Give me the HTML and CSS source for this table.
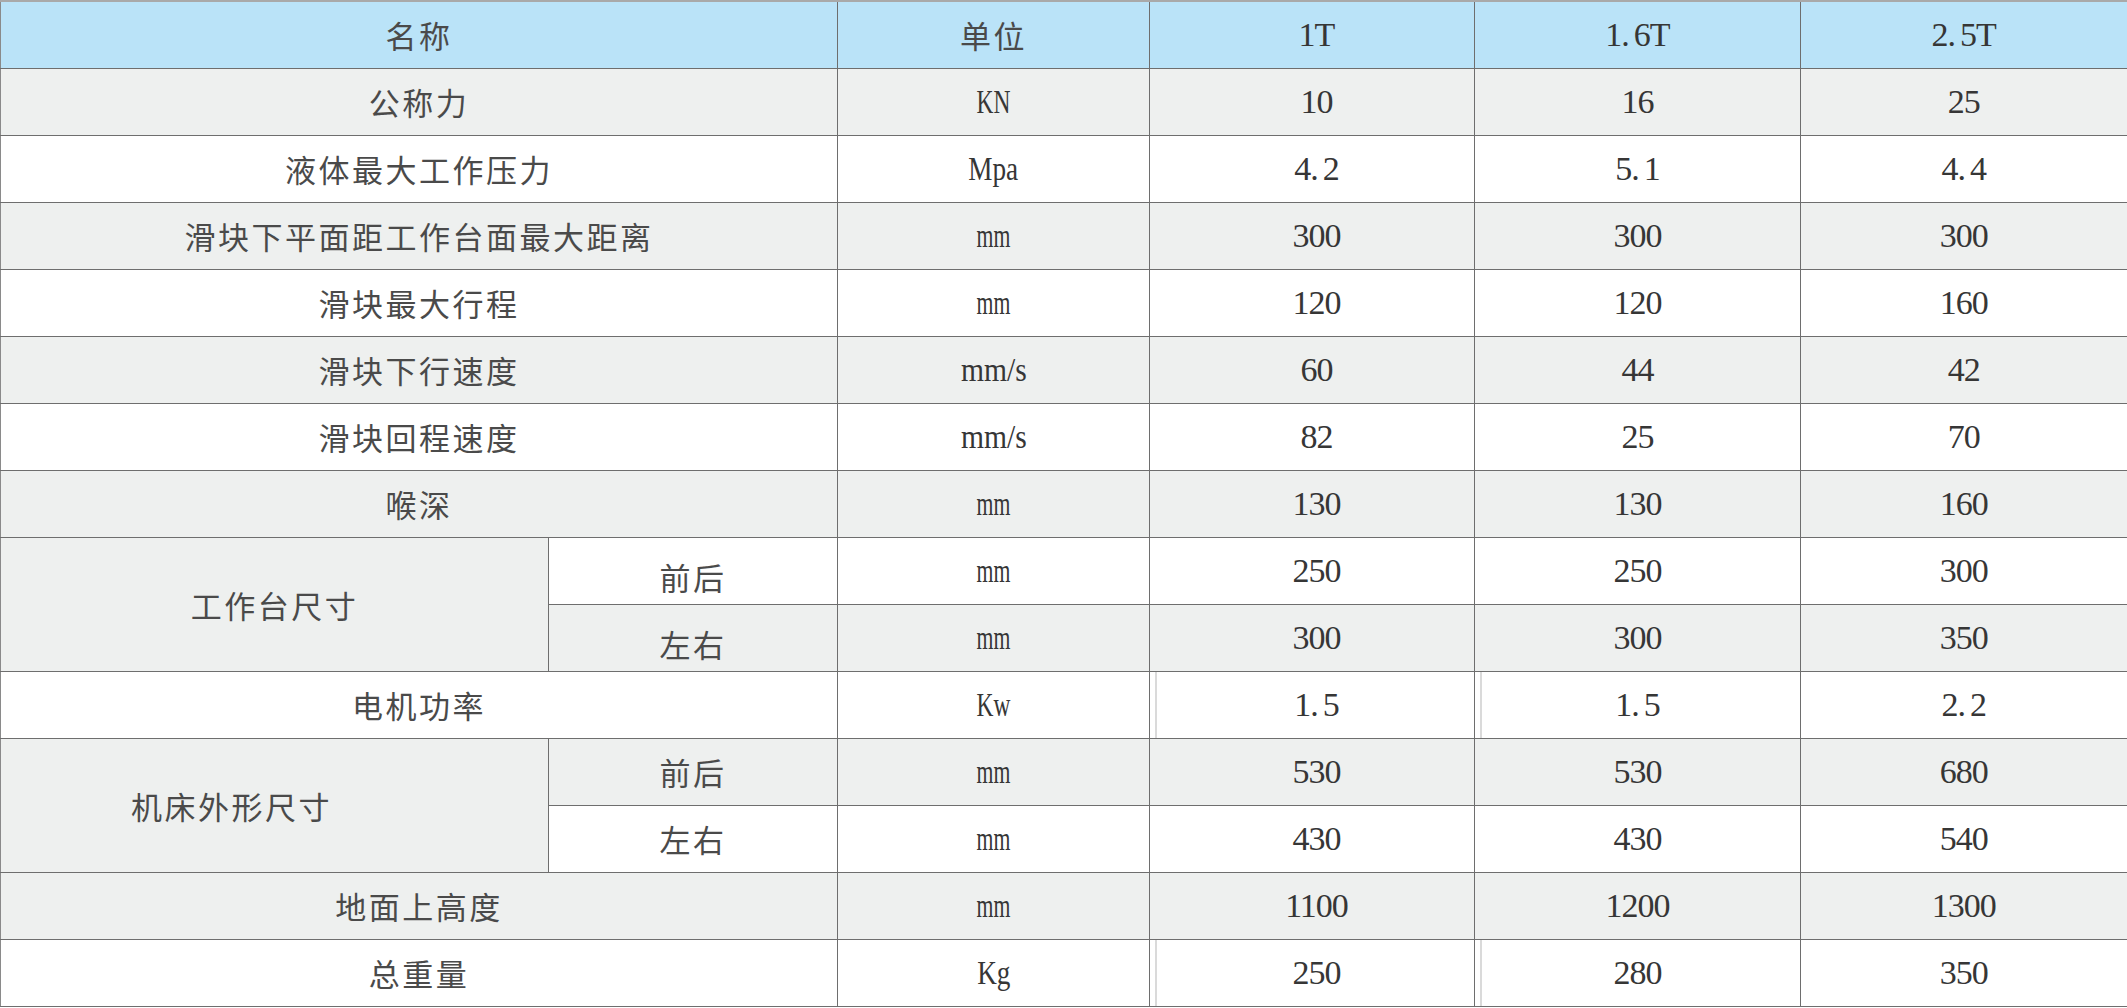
FILE: index.html
```html
<!DOCTYPE html>
<html lang="zh-CN">
<head>
<meta charset="utf-8">
<title>参数表</title>
<link rel="stylesheet" href="styles.css">
</head>
<body>
<table class="spec">
  <colgroup>
    <col class="c-name1"><col class="c-name2"><col class="c-unit"><col class="c-v1"><col class="c-v2"><col class="c-v3">
  </colgroup>
  <thead>
    <tr class="head">
      <th colspan="2" class="zh">名称</th>
      <th class="zh">单位</th>
      <th class="lt v1">1T</th>
      <th class="lt v2">1<span class="pt">.</span>6T</th>
      <th class="lt">2<span class="pt">.</span>5T</th>
    </tr>
  </thead>
  <tbody>
    <tr class="g">
      <td colspan="2" class="zh">公称力</td>
      <td class="lt"><span class="u u-kn">KN</span></td>
      <td class="lt v1">10</td><td class="lt v2">16</td><td class="lt">25</td>
    </tr>
    <tr class="w">
      <td colspan="2" class="zh">液体最大工作压力</td>
      <td class="lt"><span class="u u-mpa">Mpa</span></td>
      <td class="lt v1">4<span class="pt">.</span>2</td><td class="lt v2">5<span class="pt">.</span>1</td><td class="lt">4<span class="pt">.</span>4</td>
    </tr>
    <tr class="g">
      <td colspan="2" class="zh">滑块下平面距工作台面最大距离</td>
      <td class="lt"><span class="u u-mm">mm</span></td>
      <td class="lt v1">300</td><td class="lt v2">300</td><td class="lt">300</td>
    </tr>
    <tr class="w">
      <td colspan="2" class="zh">滑块最大行程</td>
      <td class="lt"><span class="u u-mm">mm</span></td>
      <td class="lt v1">120</td><td class="lt v2">120</td><td class="lt">160</td>
    </tr>
    <tr class="g">
      <td colspan="2" class="zh">滑块下行速度</td>
      <td class="lt"><span class="u u-mms">mm/s</span></td>
      <td class="lt v1">60</td><td class="lt v2">44</td><td class="lt">42</td>
    </tr>
    <tr class="w">
      <td colspan="2" class="zh">滑块回程速度</td>
      <td class="lt"><span class="u u-mms">mm/s</span></td>
      <td class="lt v1">82</td><td class="lt v2">25</td><td class="lt">70</td>
    </tr>
    <tr class="g">
      <td colspan="2" class="zh">喉深</td>
      <td class="lt"><span class="u u-mm">mm</span></td>
      <td class="lt v1">130</td><td class="lt v2">130</td><td class="lt">160</td>
    </tr>
    <tr class="w">
      <td rowspan="2" class="zh grp">工作台尺寸</td>
      <td class="zh sub">前后</td>
      <td class="lt"><span class="u u-mm">mm</span></td>
      <td class="lt v1">250</td><td class="lt v2">250</td><td class="lt">300</td>
    </tr>
    <tr class="g">
      <td class="zh sub">左右</td>
      <td class="lt"><span class="u u-mm">mm</span></td>
      <td class="lt v1">300</td><td class="lt v2">300</td><td class="lt">350</td>
    </tr>
    <tr class="w">
      <td colspan="2" class="zh">电机功率</td>
      <td class="lt"><span class="u u-kw">Kw</span></td>
      <td class="lt v1 dbl">1<span class="pt">.</span>5</td><td class="lt v2 dbl">1<span class="pt">.</span>5</td><td class="lt">2<span class="pt">.</span>2</td>
    </tr>
    <tr class="g">
      <td rowspan="2" class="zh grp grp-left">机床外形尺寸</td>
      <td class="zh">前后</td>
      <td class="lt"><span class="u u-mm">mm</span></td>
      <td class="lt v1">530</td><td class="lt v2">530</td><td class="lt">680</td>
    </tr>
    <tr class="w">
      <td class="zh">左右</td>
      <td class="lt"><span class="u u-mm">mm</span></td>
      <td class="lt v1">430</td><td class="lt v2">430</td><td class="lt">540</td>
    </tr>
    <tr class="g">
      <td colspan="2" class="zh">地面上高度</td>
      <td class="lt"><span class="u u-mm">mm</span></td>
      <td class="lt v1">1100</td><td class="lt v2">1200</td><td class="lt">1300</td>
    </tr>
    <tr class="w">
      <td colspan="2" class="zh">总重量</td>
      <td class="lt"><span class="u u-kg">Kg</span></td>
      <td class="lt v1 dbl">250</td><td class="lt v2 dbl">280</td><td class="lt">350</td>
    </tr>
  </tbody>
</table>
</body>
</html>
```
FILE: styles.css
```css
html, body {
  margin: 0;
  padding: 0;
  background: #ffffff;
}

.spec {
  width: 2127px;
  table-layout: fixed;
  border-collapse: collapse;
  color: #363636;
}

.c-name1 { width: 548px; }
.c-name2 { width: 289px; }
.c-unit  { width: 312px; }
.c-v1    { width: 325px; }
.c-v2    { width: 326px; }
.c-v3    { width: 327px; }

.spec th,
.spec td {
  height: 67px;
  padding: 0;
  box-sizing: border-box;
  text-align: center;
  vertical-align: middle;
  font-weight: normal;
  border: 1px solid #6e6e6e;
  white-space: nowrap;
}

.spec thead th {
  border-top: 2px solid #a9a9a9;
}

.spec tr > :last-child {
  border-right: 2px solid #a9a9a9;
}

.spec tr > :first-child {
  border-left: 1px solid #8a8a8a;
}

.spec .v1 {
  padding-left: 9px;
}

.spec .v2 {
  border-left-color: #9a9a9a;
}

.head { background: #bae3f8; }
.g { background: #eef0ef; }
.w { background: #ffffff; }

.spec .grp { background: #eef0ef; }

.spec .grp-left {
  padding-right: 86px;
}

.zh {
  font-family: "Noto Sans CJK SC", "Noto Sans", sans-serif;
  font-weight: 300;
  font-size: 31px;
  letter-spacing: 2.5px;
  padding-left: 2px;
  color: #4a4a4a;
}

.spec .sub {
  padding-top: 11px;
}

.lt {
  font-family: "Liberation Serif", "Times New Roman", serif;
  font-size: 34px;
  letter-spacing: -1px;
}

.pt {
  margin-right: 5px;
}

.u {
  display: inline-block;
  letter-spacing: 0;
  transform-origin: center;
}
.u-kn  { transform: scaleX(0.69); }
.u-mpa { transform: scaleX(0.8); }
.u-mm  { transform: scaleX(0.64); }
.u-mms { transform: scaleX(0.87); }
.u-kw  { transform: scaleX(0.69); }
.u-kg  { transform: scaleX(0.8); }

.dbl {
  background-image: linear-gradient(to right, transparent 5px, #b5b5b5 5px, #b5b5b5 6px, transparent 6px);
}
```
